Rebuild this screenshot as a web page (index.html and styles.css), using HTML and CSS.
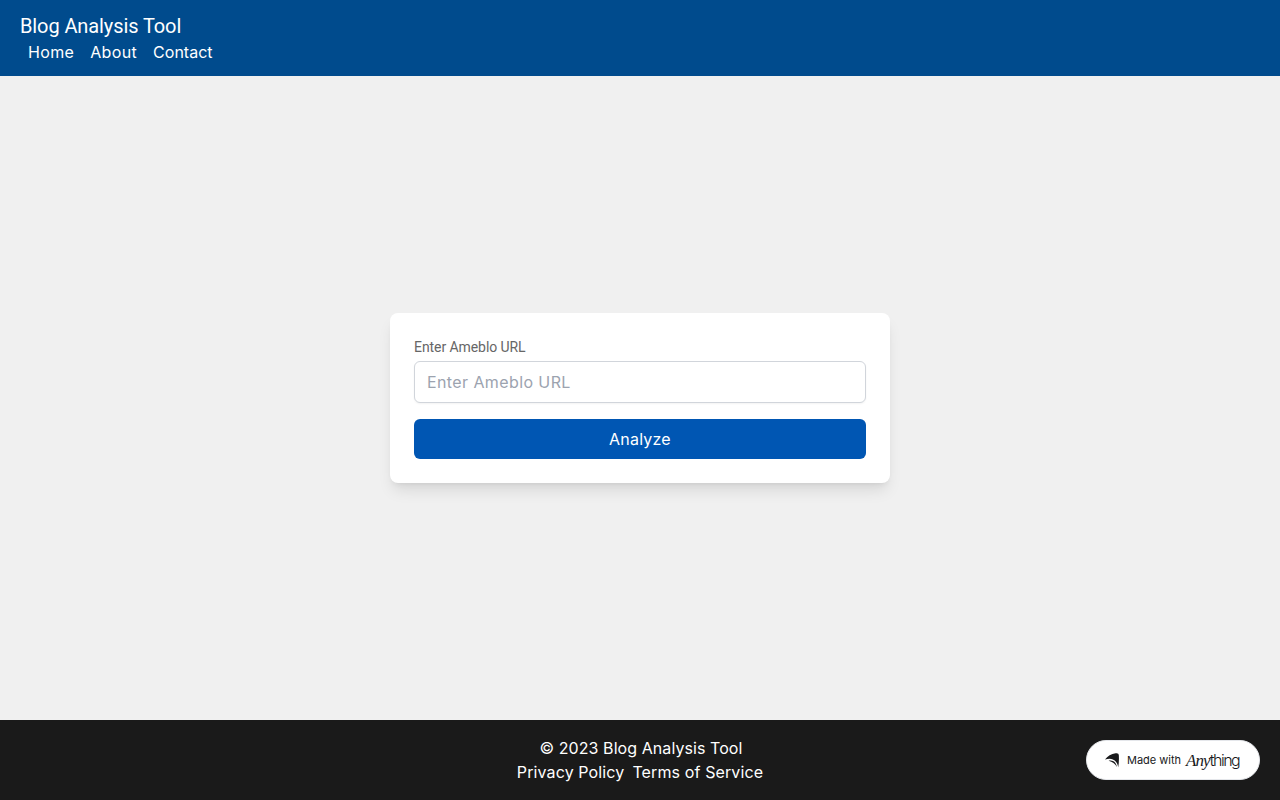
FILE: index.html
```html
<!DOCTYPE html>
<html lang="en">
<head>
<meta charset="UTF-8">
<title>Blog Analysis Tool</title>
<link rel="stylesheet" href="styles.css">
</head>
<body>

    <header class="header">
        <div class="title">Blog Analysis Tool</div>
        <nav class="nav">
            <a href="#">Home</a>
            <a href="#">About</a>
            <a href="#">Contact</a>
        </nav>
    </header>

    <main class="main">
        <form class="card">
            <label for="url">Enter Ameblo URL</label>
            <input type="text" id="url" name="url" placeholder="Enter Ameblo URL">
            <button type="button">Analyze</button>
        </form>
    </main>

    <footer class="footer">
        <p>© 2023 Blog Analysis Tool</p>
        <div class="footer-links">
            <a href="#">Privacy Policy</a>
            <a href="#">Terms of Service</a>
        </div>
    </footer>

    <a href="#" class="badge">
        <svg class="badge-icon" width="14" height="15" viewBox="0 0 14 15">
            <path d="M0 6.6C2.4 3.2 6.4.9 10.6.3Q13.8-.2 13.8 2C14.1 6 13.9 10.5 13.2 14.2C12.4 8 7.6 3.8 0 6.6Z" fill="#18191b"/>
            <path d="M3.6 7.7C8 6.4 11.2 9.4 12 14C10 10.8 7.6 8.8 3.6 7.7Z" fill="#18191b"/>
        </svg>
        <span class="badge-text">Made with</span>
        <span class="badge-logo"><i>Any</i><b>thing</b></span>
    </a>

</body>
</html>
```
FILE: styles.css
```css
* {
    box-sizing: border-box;
}

body {
    margin: 0;
    min-height: 100vh;
    display: flex;
    flex-direction: column;
    background-color: #f0f0f0;
    font-family: Inter, sans-serif;
    font-size: 16px;
    font-weight: 370;
    line-height: 24px;
}

a {
    color: inherit;
    text-decoration: none;
}

.header {
    background-color: #004b8d;
    color: #fff;
    padding: 12px 20px;
}

.title {
    font-family: Roboto, sans-serif;
    font-size: 20px;
    font-weight: 400;
    line-height: 28px;
    letter-spacing: -0.1px;
}

.nav {
    display: flex;
    gap: 16px;
    padding: 0 8px;
    letter-spacing: 0.35px;
}

.nav a:last-child {
    letter-spacing: 0;
}

.main {
    flex: 1;
    display: flex;
    align-items: center;
    justify-content: center;
}

.card {
    width: 500px;
    padding: 24px;
    background-color: #fff;
    border-radius: 8px;
    box-shadow: 0 10px 15px -3px rgba(0, 0, 0, 0.1), 0 4px 6px -4px rgba(0, 0, 0, 0.1);
}

.card label {
    display: block;
    margin-bottom: 4px;
    color: #666;
    font-family: Roboto, sans-serif;
    font-size: 14px;
    font-weight: 400;
    line-height: 20px;
    letter-spacing: -0.07px;
}

.card input {
    display: block;
    width: 100%;
    height: 42px;
    margin-bottom: 16px;
    padding: 8px 12px;
    border: 1px solid #d1d5db;
    border-radius: 6px;
    box-shadow: 0 1px 2px rgba(0, 0, 0, 0.05);
    font: inherit;
    letter-spacing: 0.4px;
}

.card input::placeholder {
    color: #9ca3af;
}

.card button {
    display: block;
    width: 100%;
    height: 40px;
    padding: 8px 16px;
    border: none;
    border-radius: 6px;
    background-color: #0056b3;
    color: #fff;
    font: inherit;
    letter-spacing: 0.2px;
    cursor: pointer;
}

.footer {
    padding: 16px;
    background-color: #1a1a1a;
    color: #fff;
    letter-spacing: 0.12px;
    text-align: center;
}

.footer p {
    margin: 0 0 0 2px;
    letter-spacing: 0.07px;
}

.footer-links {
    display: flex;
    justify-content: center;
    gap: 8px;
}

.badge {
    position: fixed;
    right: 20px;
    bottom: 20px;
    width: 174px;
    height: 40px;
    padding-left: 18px;
    display: flex;
    align-items: center;
    border: 1px solid #e5e7eb;
    border-radius: 20px;
    background-color: #fff;
    color: #18191b;
    white-space: nowrap;
}

.badge-icon {
    flex: none;
    margin-right: 8px;
}

.badge-text {
    width: 59px;
    font-size: 11px;
    font-weight: 400;
}

.badge-logo {
    display: flex;
    align-items: baseline;
}

.badge-logo i {
    font-family: "Liberation Serif", serif;
    font-size: 17px;
    letter-spacing: -0.9px;
}

.badge-logo b {
    font-weight: 300;
    font-size: 16px;
    letter-spacing: -1.5px;
}
```
